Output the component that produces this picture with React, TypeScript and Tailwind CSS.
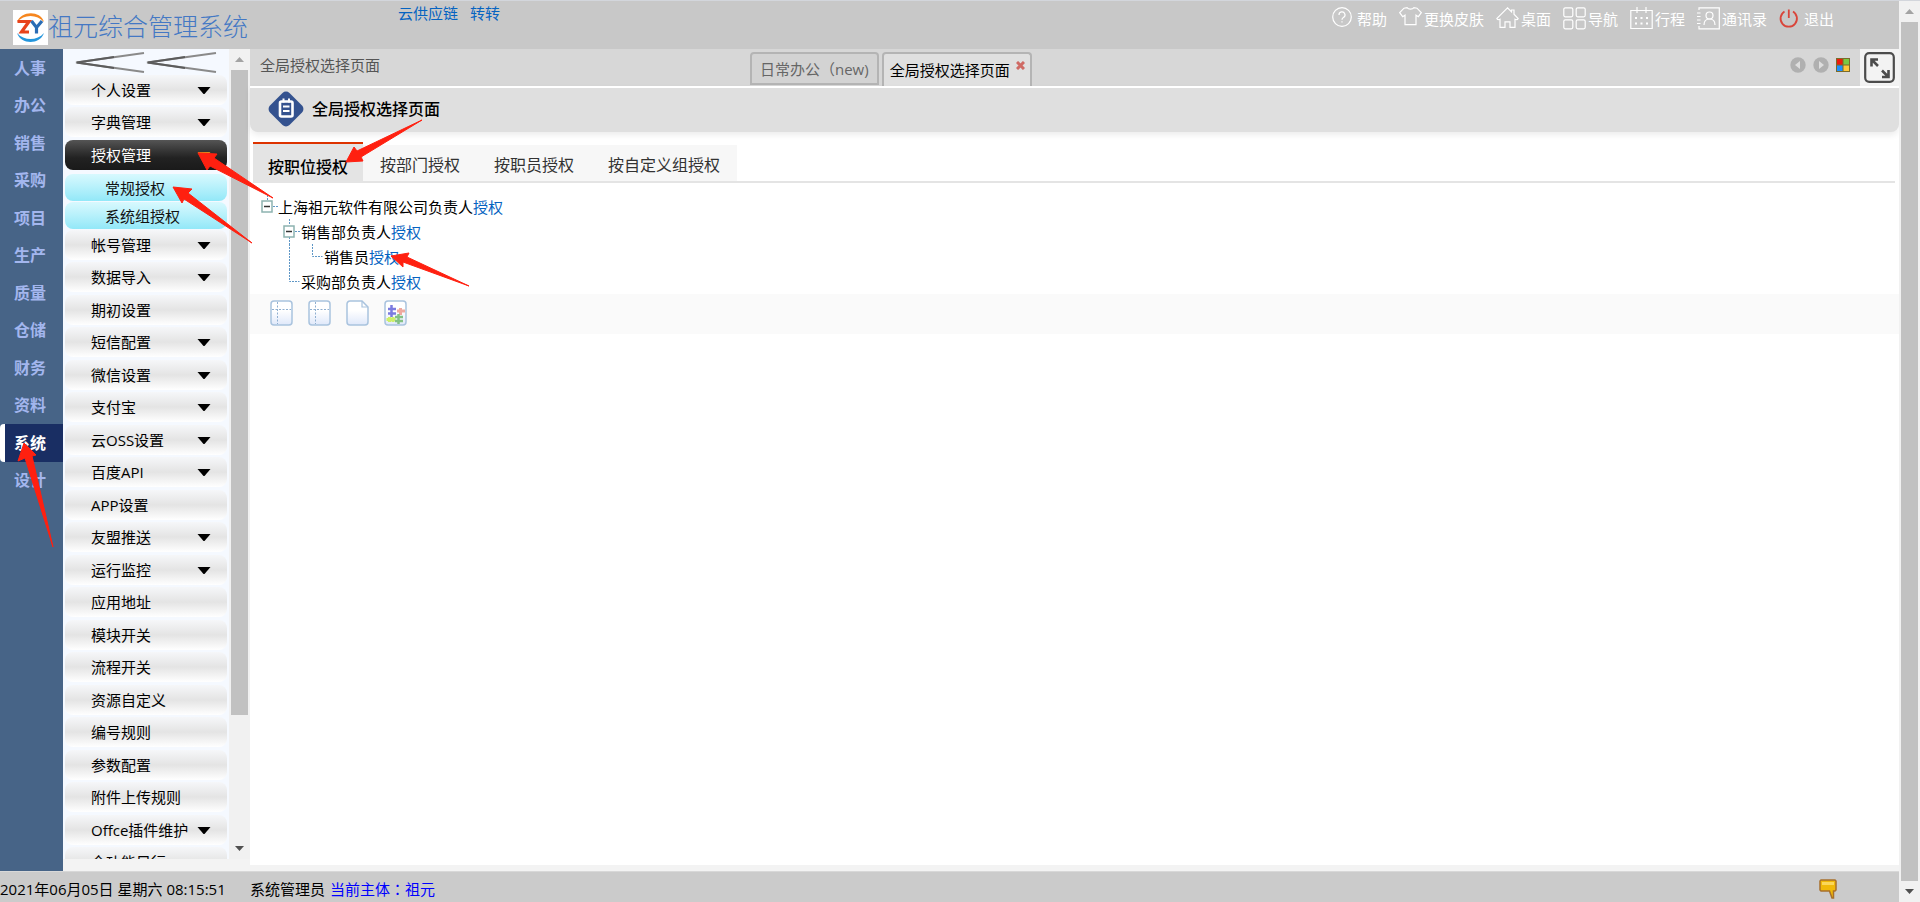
import { useState, type ReactNode } from "react";
import clsx from "clsx";

interface MenuItem {
  label: string;
  arrow?: boolean;
}

const MODULES = ["人事", "办公", "销售", "采购", "项目", "生产", "质量", "仓储", "财务", "资料", "系统", "设计"];

const MENU_TOP: MenuItem[] = [
  { label: "个人设置", arrow: true },
  { label: "字典管理", arrow: true },
  { label: "授权管理", arrow: true },
];

const SUB_MENU = ["常规授权", "系统组授权"];

const MENU_REST: MenuItem[] = [
  { label: "帐号管理", arrow: true },
  { label: "数据导入", arrow: true },
  { label: "期初设置" },
  { label: "短信配置", arrow: true },
  { label: "微信设置", arrow: true },
  { label: "支付宝", arrow: true },
  { label: "云OSS设置", arrow: true },
  { label: "百度API", arrow: true },
  { label: "APP设置" },
  { label: "友盟推送", arrow: true },
  { label: "运行监控", arrow: true },
  { label: "应用地址" },
  { label: "模块开关" },
  { label: "流程开关" },
  { label: "资源自定义" },
  { label: "编号规则" },
  { label: "参数配置" },
  { label: "附件上传规则" },
  { label: "Offce插件维护", arrow: true },
  { label: "全功能目行" },
];

const AUTH_TABS = ["按职位授权", "按部门授权", "按职员授权", "按自定义组授权"];

/* ── Icons ─────────────────────────────────────────────────────────── */

function NavIcon({ children, className }: { children: ReactNode; className?: string }) {
  return (
    <svg
      width="23"
      height="24"
      viewBox="0 0 23 24"
      fill="none"
      stroke="currentColor"
      strokeWidth="1.2"
      className={clsx("shrink-0", className)}
      aria-hidden="true"
    >
      {children}
    </svg>
  );
}

const NAV_LINKS: { label: string; icon: ReactNode }[] = [
  {
    label: "帮助",
    icon: (
      <NavIcon>
        <circle cx="10" cy="10" r="9.3" />
        <path d="M7 8a3 3 0 1 1 4.400 2.500c-1 .6-1.400 1-1.400 2.300M10 14.200v1.400" />
      </NavIcon>
    ),
  },
  {
    label: "更换皮肤",
    icon: (
      <NavIcon>
        <path d="M8 .7c1.500 2 5.500 2 7 0l3 .5 4.300 4.500-3 4-2.300-1.500v9.500H6V8.200L3.700 9.700l-3-4L5 1.200z" />
      </NavIcon>
    ),
  },
  {
    label: "桌面",
    icon: (
      <NavIcon>
        <path d="M11.500.8.8 11.500c.8 1.500 1.800 1.500 3.200.8v8h5v-5.500h5v5.500h5v-8c1.500.7 2.500.7 3.200-.8L18 7.200V3h-2.500v1.800z" />
      </NavIcon>
    ),
  },
  {
    label: "导航",
    icon: (
      <NavIcon>
        <rect x="0.8" y="0.8" width="9" height="9" rx="1.500" />
        <rect x="13.200" y="0.8" width="9" height="9" rx="1.500" />
        <rect x="0.8" y="12.800" width="9" height="9" rx="1.500" />
        <rect x="13.200" y="12.800" width="9" height="9" rx="1.500" />
      </NavIcon>
    ),
  },
  {
    label: "行程",
    icon: (
      <NavIcon>
        <path d="M.8 3.500h21.400v18H.8zM7 0v6M16 0v6" />
        <path d="M5 11h2M10.500 11h2M16 11h2M5 16.500h2M10.500 16.500h2M16 16.500h2" strokeWidth="2" />
      </NavIcon>
    ),
  },
  {
    label: "通讯录",
    icon: (
      <NavIcon>
        <path d="M2 3V.8h20.300v21H2V19M0 6h3.500M0 9.500h3.500M0 13h3.500M0 16.500h3.500" />
        <circle cx="12.500" cy="8.500" r="3.500" />
        <path d="M7 18c0-4 2.500-6 5.500-6s5.500 2 5.500 6" />
      </NavIcon>
    ),
  },
  {
    label: "退出",
    icon: (
      <NavIcon className="text-[#d9453a]">
        <path d="M5.500 4.500a8.200 8.200 0 1 0 8.500 0M9.800 2.500V11" strokeWidth="1.800" />
      </NavIcon>
    ),
  },
];

function Logo() {
  return (
    <svg width="35" height="35" viewBox="0 0 35 35" className="shrink-0" aria-hidden="true">
      <rect width="35" height="35" fill="#fff" />
      <path d="M4 12C8 1 27 0 31 12 24 4 11 4 4 12z" fill="#f6861f" />
      <path d="M4 23c4 12 23 12 27 0-7 8-20 8-27 0z" fill="#2496dc" />
      <path d="M4.500 11.500H16L8.500 22H16" fill="none" stroke="#e8431c" strokeWidth="3.200" />
      <path d="M18.500 11l5 6.500L29 11M23.500 17v6.500" fill="none" stroke="#2a6cb4" strokeWidth="3.200" />
    </svg>
  );
}

function DownArrow({ className }: { className?: string }) {
  return (
    <svg width="14" height="9" viewBox="0 0 14 9" className={className} aria-hidden="true">
      <path d="M.5 1h13L7.500 8h-1z" fill="currentColor" />
    </svg>
  );
}

function CollapseArrows() {
  return (
    <svg width="144" height="23" viewBox="0 0 144 23" fill="none" aria-hidden="true">
      <path d="M70 2 2 11.500 70 21" stroke="#8a8a8a" strokeWidth="2.200" />
      <path d="M142 2 73 11.500l69 9.500" stroke="#8a8a8a" strokeWidth="2.200" />
      <path d="M40 6 3 11.500 40 17M111 6l-37 5.500 37 5.500" stroke="#5c5c5c" strokeWidth="2" />
    </svg>
  );
}

/* ── Scrollbar ─────────────────────────────────────────────────────── */

function ScrollBar({ className, thumb }: { className?: string; thumb: string }) {
  return (
    <div className={clsx("flex shrink-0 flex-col items-center bg-[#f1f1f1]", className)}>
      <div className="flex h-[21px] w-full shrink-0 items-center justify-center">
        <svg width="9" height="5" viewBox="0 0 9 5" aria-hidden="true">
          <path d="M0 5 4.500 0 9 5z" fill="#a3a3a3" />
        </svg>
      </div>
      <div className="min-h-0 w-full flex-1">
        <div className={clsx("mx-auto w-[17px] bg-[#c1c1c1]", thumb)} />
      </div>
      <div className="flex h-[21px] w-full shrink-0 items-center justify-center">
        <svg width="9" height="5" viewBox="0 0 9 5" aria-hidden="true">
          <path d="M0 0 4.500 5 9 0z" fill="#505050" />
        </svg>
      </div>
    </div>
  );
}

/* ── Side menu ─────────────────────────────────────────────────────── */

function MenuButton({ item, active = false }: { item: MenuItem; active?: boolean }) {
  return (
    <li className="pb-0.5">
      <button
        type="button"
        className={clsx(
          "flex h-[30px] w-full items-center justify-between rounded-lg pr-4 pl-[26px] text-left text-[15px] leading-5",
          active
            ? "bg-linear-to-b from-[#555] via-[#222] via-60% to-[#1a1a1a] text-white"
            : "bg-linear-to-b from-[#f6f7f9] via-[#e4e4e4] via-50% to-white text-black"
        )}
      >
        <span className="whitespace-nowrap">{item.label}</span>
        {item.arrow && <DownArrow className={active ? "text-[#e08a1c]" : "text-black"} />}
      </button>
    </li>
  );
}

function SideMenu() {
  return (
    <nav className="flex min-h-0 flex-1 bg-[#f5f9ff]">
      <div className="flex w-[166px] flex-col overflow-hidden px-0.5">
        <button type="button" aria-label="收起" className="flex h-[26px] shrink-0 items-center justify-center">
          <CollapseArrows />
        </button>
        <ul className="grid shrink-0 auto-rows-[32px_33px]">
          {MENU_TOP.map((item) => (
            <MenuButton key={item.label} item={item} active={item.label === "授权管理"} />
          ))}
        </ul>
        <ul className="flex shrink-0 flex-col gap-px pt-0.5">
          {SUB_MENU.map((label) => (
            <li key={label}>
              <a
                href="#"
                className="flex h-[27px] items-center rounded-lg bg-linear-to-b from-[#d8f9fe] to-[#92e8f8] pl-10 text-[15px] leading-5 text-[#111]"
              >
                {label}
              </a>
            </li>
          ))}
        </ul>
        <ul className="grid shrink-0 auto-rows-[32px_33px] pt-px">
          {MENU_REST.map((item) => (
            <MenuButton key={item.label} item={item} />
          ))}
        </ul>
      </div>
      <ScrollBar className="w-[21px]" thumb="h-[84%]" />
    </nav>
  );
}

/* ── Position tree ─────────────────────────────────────────────────── */

function ToggleBox({ x, y }: { x: number; y: number }) {
  return (
    <g>
      <rect x={x} y={y} width="10" height="11" fill="#fff" stroke="#8db3b0" strokeWidth="1.500" />
      <path d={`M${x + 2} ${y + 5.5}h6`} stroke="#333" strokeWidth="1.500" />
    </g>
  );
}

const DOTS = { stroke: "#5f97c6", strokeWidth: 1, strokeDasharray: "2 1" };

const TREE: { label: string; width: number; lines: ReactNode }[] = [
  {
    label: "上海祖元软件有限公司负责人",
    width: 18,
    lines: (
      <>
        <path d="M7.500 1v6M13 12.500h5" {...DOTS} />
        <ToggleBox x={2} y={7} />
      </>
    ),
  },
  {
    label: "销售部负责人",
    width: 41,
    lines: (
      <>
        <path d="M29.500 0v6M29.500 18v7M35 12.500h5" {...DOTS} />
        <ToggleBox x={24} y={7} />
      </>
    ),
  },
  {
    label: "销售员",
    width: 64,
    lines: <path d="M29.500 0v25M52.500 0v12.500h10" {...DOTS} />,
  },
  {
    label: "采购部负责人",
    width: 41,
    lines: <path d="M29.500 0v12.500h10" {...DOTS} />,
  },
];

function PositionTree() {
  return (
    <ul className="pt-[11px] pl-2.5">
      {TREE.map((node) => (
        <li key={node.label} className="flex h-[25px] items-center text-[15px] leading-5">
          <svg width={node.width} height="25" viewBox={`0 0 ${node.width} 25`} fill="none" aria-hidden="true">
            {node.lines}
          </svg>
          <span className="text-black">{node.label}</span>
          <a href="#" className="text-[#0563c1]">授权</a>
        </li>
      ))}
    </ul>
  );
}

function SheetIcon({ kind }: { kind: string }) {
  return (
    <svg width="23" height="26" viewBox="0 0 23 26" fill="none" aria-hidden="true">
      <defs>
        <linearGradient id={`sheet-${kind}`} x1="0" y1="0" x2="0" y2="1">
          <stop offset="0.4" stopColor="#fff" />
          <stop offset="1" stopColor="#dfe8fa" />
        </linearGradient>
      </defs>
      {kind === "page" ? (
        <>
          <path d="M4 1h12l6 6v15a3 3 0 0 1-3 3H4a3 3 0 0 1-3-3V4a3 3 0 0 1 3-3z" fill={`url(#sheet-${kind})`} stroke="#a9c3de" strokeWidth="1.500" />
          <path d="M16 1v6h6" stroke="#a9c3de" strokeWidth="1.200" />
        </>
      ) : (
        <rect x="1" y="1" width="21" height="24" rx="3" fill={`url(#sheet-${kind})`} stroke="#a9c3de" strokeWidth="1.500" />
      )}
      {(kind === "expand" || kind === "collapse") && (
        <path d="M7.500 2v22M2 9.500h19" stroke="#8fafd0" strokeDasharray="2 1.500" />
      )}
      {kind === "puzzle" && (
        <g strokeWidth="3">
          <path d="M13 11h8M16.500 8v7" stroke="#efaaa0" />
          <path d="M2.500 19.500h9M5.500 17v5M9 17v5" stroke="#cdf06a" />
          <path d="M14.500 14v10M11 17h8M11 21h8" stroke="#84c184" strokeWidth="2.500" />
          <path d="M7.500 5v12M4 9h8M4 13.500h8" stroke="#7b7be0" strokeWidth="2.500" />
        </g>
      )}
    </svg>
  );
}

const TREE_TOOLS = [
  { kind: "expand", label: "全部展开" },
  { kind: "collapse", label: "全部收起" },
  { kind: "page", label: "新建" },
  { kind: "puzzle", label: "组件" },
];

/* ── Main panel ────────────────────────────────────────────────────── */

function WindowTabs() {
  return (
    <div className="flex h-[37px] shrink-0 bg-[#d7d7d7]">
      <div className="w-[500px] pl-2.5 text-[15px] leading-8 text-[#555]">全局授权选择页面</div>
      <div className="flex flex-1 items-end gap-[3px]">
        <button
          type="button"
          className="mb-px h-[33px] rounded-t border-2 border-[#b4b4b4] bg-[#d3d3d3] px-2 text-[15px] leading-5 whitespace-nowrap text-[#666]"
        >
          日常办公（new)
        </button>
        <div className="flex h-[34px] rounded-t border-2 border-b-0 border-[#b4b4b4] bg-[#e0e0e0] pr-[5px] pl-1.5">
          <button type="button" className="text-[15px] leading-5 text-black">全局授权选择页面</button>
          <button type="button" aria-label="关闭" className="flex items-start pt-[7px] pl-1.5">
            <svg width="9" height="9" viewBox="0 0 9 9" aria-hidden="true">
              <path d="M1 1l7 7M8 1 1 8" stroke="#cf6a64" strokeWidth="3" />
            </svg>
          </button>
        </div>
      </div>
      <div className="flex items-start gap-[7px] pt-2 pr-2.5">
        <button type="button" aria-label="上一个">
          <svg width="16" height="16" viewBox="0 0 16 16" aria-hidden="true">
            <circle cx="8" cy="8" r="7.700" fill="#b0b0b0" />
            <path d="M10 4v8L5 8z" fill="#dedede" />
          </svg>
        </button>
        <button type="button" aria-label="下一个">
          <svg width="16" height="16" viewBox="0 0 16 16" aria-hidden="true">
            <circle cx="8" cy="8" r="7.700" fill="#b0b0b0" />
            <path d="M6 4v8l5-4z" fill="#dedede" />
          </svg>
        </button>
        <button type="button" aria-label="窗口" className="pt-px">
          <svg width="14" height="14" viewBox="0 0 14 14" aria-hidden="true">
            <rect width="14" height="14" fill="#7b6b2a" />
            <path d="M1 1h5.500v5.500H1z" fill="#ee1c0c" />
            <path d="M7.500 1H13v5.500H7.500z" fill="#7ac943" />
            <path d="M1 7.500h5.500V13H1z" fill="#1e90ff" />
            <path d="M7.500 7.500H13V13H7.500z" fill="#ffc83c" />
          </svg>
        </button>
      </div>
      <button type="button" aria-label="全屏" className="flex w-[39px] items-center justify-center bg-[#f3f3f3]">
        <svg width="31" height="31" viewBox="0 0 31 31" fill="none" stroke="#4c4c4c" aria-hidden="true">
          <rect x="1.200" y="1.200" width="28.600" height="28.600" rx="4" strokeWidth="2.200" />
          <path d="M7.500 14.500v-7H14M8 8l6 6" strokeWidth="2.600" />
          <path d="M24.500 18v7H18M24 24.500l-6-6" strokeWidth="2.600" />
        </svg>
      </button>
    </div>
  );
}

function PageTitle() {
  return (
    <div className="flex h-[46px] shrink-0 items-center gap-2 rounded-b-lg border-t-2 border-white bg-[#dfdfdf] pb-0.5 pl-[18px] shadow-[0_3px_6px_rgba(0,0,0,0.08)]">
      <svg width="36" height="36" viewBox="0 0 36 36" fill="none" aria-hidden="true">
        <path d="M14.500 2a5 5 0 0 1 7 0L34 14.500a5 5 0 0 1 0 7L21.500 34a5 5 0 0 1-7 0L2 21.500a5 5 0 0 1 0-7z" fill="#34528f" />
        <rect x="12" y="10.500" width="12.500" height="15" rx="1.500" stroke="#fff" strokeWidth="2.600" />
        <path d="M15.500 7.500v4M21 7.500v4M15 15.500h6.500M15 20h6.500" stroke="#fff" strokeWidth="2" />
      </svg>
      <h1 className="text-base leading-5 font-medium text-black">全局授权选择页面</h1>
    </div>
  );
}

function AuthTabs() {
  const [current, setCurrent] = useState(0);

  return (
    <div className="mt-2.5 ml-[3px] mr-1 flex items-end border-b-2 border-[#e4e4e4]">
      {AUTH_TABS.map((tab, index) => (
        <button
          key={tab}
          type="button"
          onClick={() => setCurrent(index)}
          className={clsx(
            "text-base leading-5",
            index === current
              ? "h-[39px] border-t-2 border-[#dd3300] bg-[#e4e4e4] px-[15px] pt-2 font-medium text-black"
              : "h-9 bg-[#f7f7f7] px-[17px] pt-1 text-[#333]"
          )}
        >
          {tab}
        </button>
      ))}
    </div>
  );
}

/* ── Red pointer arrows laid over the page ─────────────────────────── */

function PointerArrows() {
  return (
    <svg
      width="480"
      height="560"
      viewBox="0 1 480 560"
      fill="#ff2010"
      stroke="#ff2010"
      strokeLinejoin="round"
      className="pointer-events-none absolute top-0 left-0"
      aria-hidden="true"
    >
      <path d="M346 162l8-15 3 4 65-31-61 37 2 4z" />
      <path d="M198 153l19 1-3 4 59 40-63-32-3 4z" />
      <path d="M173 187l19 2-4 4 64 50-68-44-2 4z" />
      <path d="M391 256l18-3-2 4 62 29-66-24v5z" />
      <path d="M24 443l12 12-4 1 21 91-28-89-7 3z" />
    </svg>
  );
}

export default function App() {
  return (
    <div className="relative flex h-screen overflow-hidden border-t border-[#d3d6dc] bg-[#c8c8c8] font-['Open_Sans','Noto_Sans_CJK_SC',sans-serif]">
      <div className="flex min-w-0 flex-1 flex-col">
        {/* Header */}
        <header className="flex h-12 shrink-0 items-start bg-[#c8c8c8]">
          <div className="flex w-[398px] items-start pt-[9px] pl-[13px]">
            <Logo />
            <span className="text-[25px] leading-8 font-light text-[#4478c4]">祖元综合管理系统</span>
          </div>
          <div className="flex flex-1 gap-3 pt-0.5 text-[15px] leading-5 text-[#0563c1]">
            <a href="#">云供应链</a>
            <a href="#">转转</a>
          </div>
          <nav className="flex gap-3 pt-1.5 pr-[65px] text-[15px] leading-6 text-white">
            {NAV_LINKS.map((link) => (
              <a key={link.label} href="#" className="flex gap-0.5 whitespace-nowrap">
                {link.icon}
                {link.label}
              </a>
            ))}
          </nav>
        </header>

        <div className="flex min-h-0 flex-1 bg-[#f3f3f3]">
          {/* Module rail */}
          <nav className="w-[63px] shrink-0 bg-[#476487]">
            <ul className="flex h-[450px] flex-col">
              {MODULES.map((name) => (
                <li key={name} className="flex flex-1">
                  <a
                    href="#"
                    className={clsx(
                      "flex flex-1 items-center text-base leading-5 font-bold",
                      name === "系统"
                        ? "rounded-l-sm border-l-[5px] border-white bg-[#192e63] pl-[9px] text-white"
                        : "pl-3.5 text-[#a3b6ee]"
                    )}
                  >
                    {name}
                  </a>
                </li>
              ))}
            </ul>
          </nav>

          <div className="flex w-[187px] shrink-0 flex-col pb-3">
            <SideMenu />
          </div>

          <main className="flex min-w-0 flex-1 flex-col pb-1.5">
            <WindowTabs />
            <div className="flex min-h-0 flex-1 flex-col bg-white">
              <PageTitle />
              <AuthTabs />
              <PositionTree />
              <div className="flex h-10 items-center gap-[15px] bg-[#fafafa] pb-0.5 pl-5">
                {TREE_TOOLS.map((tool) => (
                  <button key={tool.kind} type="button" aria-label={tool.label}>
                    <SheetIcon kind={tool.kind} />
                  </button>
                ))}
              </div>
            </div>
          </main>
        </div>

        {/* Status bar */}
        <footer className="flex h-[31px] shrink-0 items-center border-t border-[#d8d8d8] bg-[#cbcbcb] pt-1 text-[15px] leading-5">
          <span className="w-[250px] whitespace-nowrap">2021年06月05日 星期六 08:15:51</span>
          <span>系统管理员</span>
          <a href="#" className="ml-[5px] text-[#0000ff]">
            当前主体<span className="font-['Noto_Sans_CJK_TC',sans-serif]" lang="zh-TW">：</span>祖元
          </a>
          <button type="button" aria-label="消息" className="mr-[62px] ml-auto">
            <svg width="18" height="20" viewBox="0 0 18 20" aria-hidden="true">
              <path d="M2 1h14l1 1v9l-1 1h-1.500v7H13l-2.500-7H2l-1-1V2z" fill="#f0b90a" stroke="#a8702c" strokeWidth="1.500" />
              <path d="M3 3h12v3H3z" fill="#fbd75a" />
            </svg>
          </button>
        </footer>
      </div>

      <ScrollBar className="w-[21px]" thumb="h-full" />
      <PointerArrows />
    </div>
  );
}
